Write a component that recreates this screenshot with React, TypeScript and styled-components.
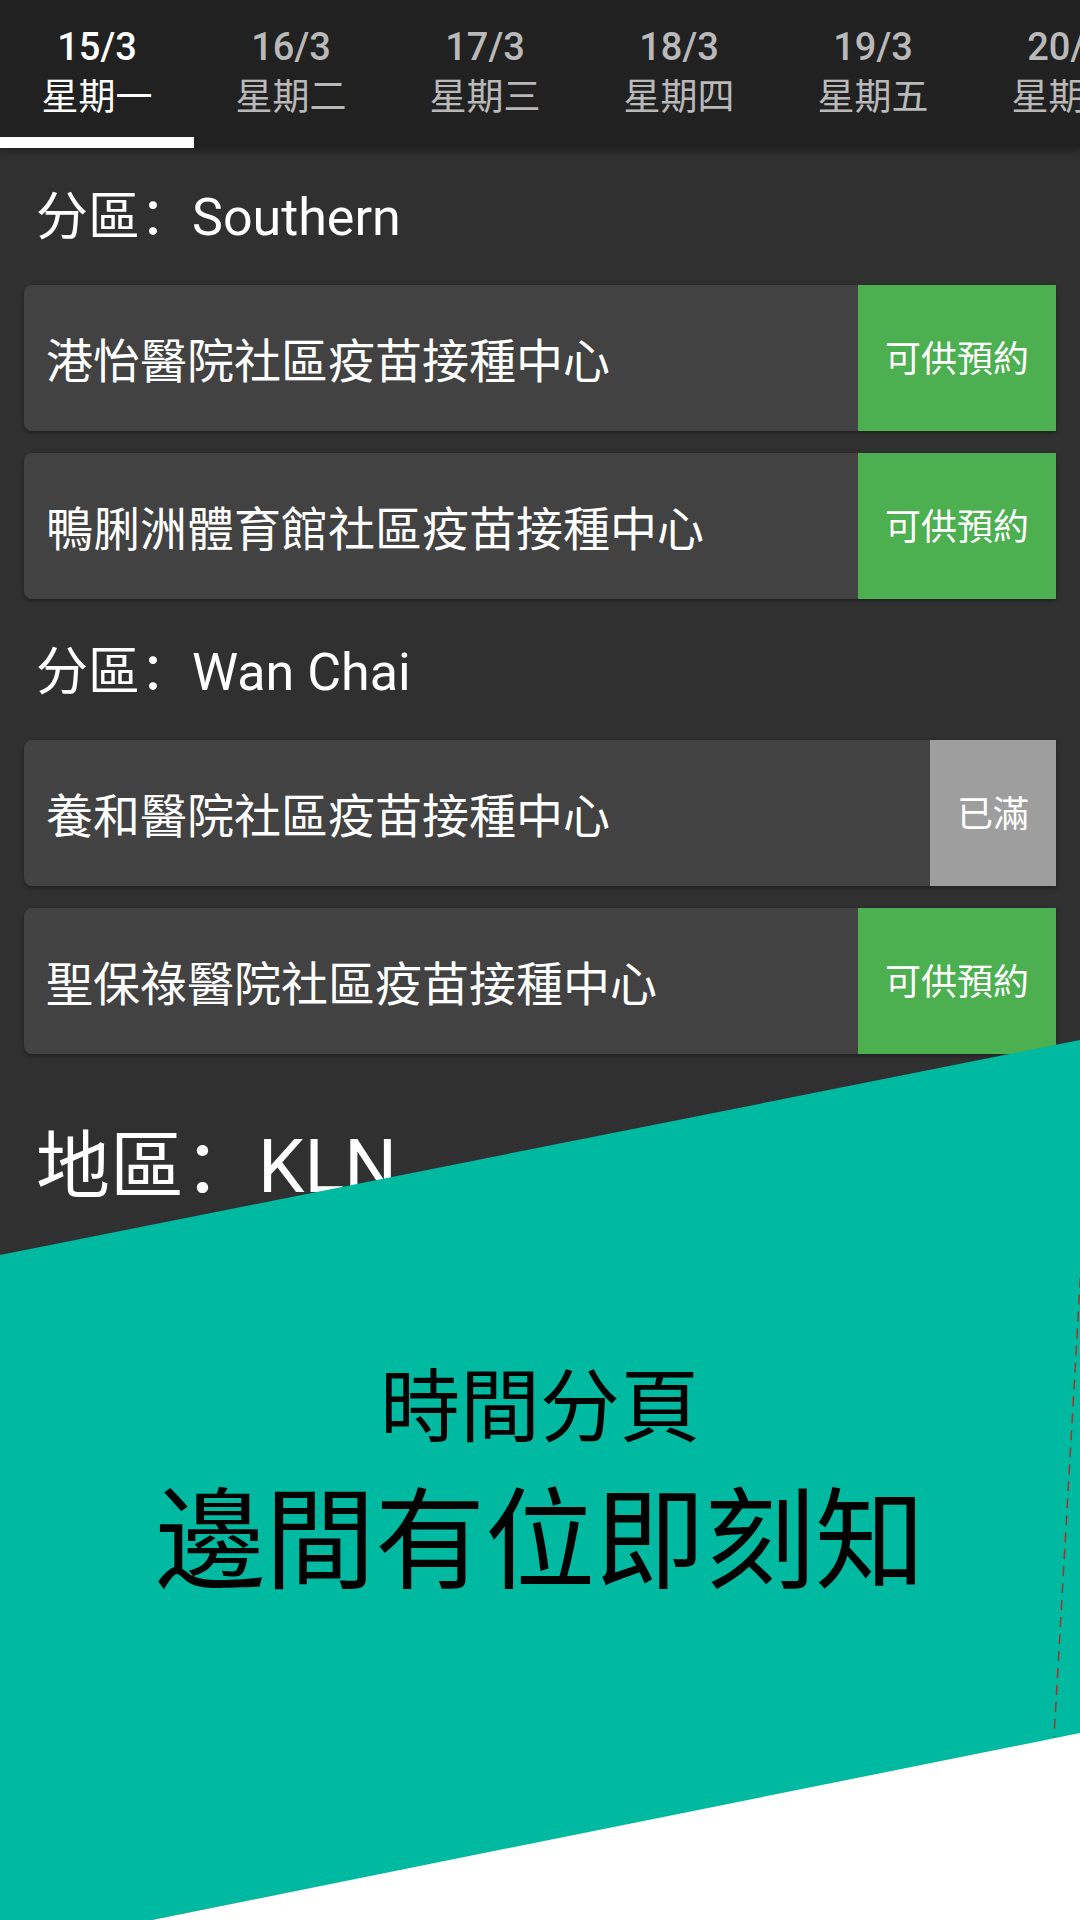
import React from "react";
import styled, { createGlobalStyle } from "styled-components";

const GlobalStyle = createGlobalStyle`
  html, body { margin: 0; padding: 0; background: #ffffff; }
  body { font-family: Roboto, "Noto Sans CJK SC", sans-serif; }
  * { box-sizing: border-box; }
`;

const Page = styled.div`
  position: relative;
  width: 1080px;
  height: 1920px;
  overflow: hidden;
  background: #303030;
  font-family: Roboto, "Noto Sans CJK SC", sans-serif;
  color: #ffffff;
`;

const TabBar = styled.nav`
  position: relative;
  z-index: 1;
  display: flex;
  height: 148px;
  background: #212121;
  box-shadow: 0 3px 8px rgba(0, 0, 0, 0.35);
  overflow: hidden;
`;

const Tab = styled.div<{ $active?: boolean }>`
  flex: 0 0 194px;
  display: flex;
  flex-direction: column;
  align-items: center;
  padding-top: 24px;
  color: ${(p) => (p.$active ? "#ffffff" : "rgba(255,255,255,0.7)")};
`;

const TabDate = styled.span`
  font-size: 38px;
  font-weight: 500;
  line-height: 46px;
  white-space: nowrap;
`;

const TabDay = styled.span`
  font-size: 37px;
  line-height: 56px;
  white-space: nowrap;
`;

const Indicator = styled.div<{ $active?: boolean }>`
  margin-top: auto;
  align-self: stretch;
  height: 11px;
  background: ${(p) => (p.$active ? "#ffffff" : "transparent")};
`;

const Content = styled.main`
  padding: 0 24px;
`;

const Section = styled.section`
  padding-top: 38px;
`;

const DistrictHeader = styled.h2`
  margin: 0 0 35px;
  padding-left: 12px;
  font-size: 52px;
  font-weight: 400;
  line-height: 64px;
`;

const CardList = styled.div`
  display: flex;
  flex-direction: column;
  gap: 22px;
  margin-bottom: 4px;
`;

const Card = styled.div`
  display: flex;
  align-items: stretch;
  height: 146px;
  background: #424242;
  border-radius: 8px 0 0 8px;
  box-shadow: 0 2px 4px rgba(0, 0, 0, 0.35);
`;

const CardName = styled.div`
  flex: 1;
  display: flex;
  align-items: center;
  padding: 8px 22px 0;
  font-size: 47px;
  line-height: 56px;
  white-space: nowrap;
`;

const Badge = styled.div<{ $full?: boolean }>`
  display: flex;
  align-items: center;
  padding: 4px 27px 0;
  background: ${(p) => (p.$full ? "#9e9e9e" : "#4caf50")};
  font-size: 36px;
  line-height: 44px;
  white-space: nowrap;
`;

const RegionHeader = styled.h1`
  margin: 69px 0 0;
  padding-left: 12px;
  font-size: 74px;
  font-weight: 400;
  line-height: 88px;
`;

const Overlay = styled.div`
  position: absolute;
  left: 0;
  right: 0;
  top: 1040px;
  bottom: 0;
  z-index: 2;
`;

const Backdrop = styled.svg`
  position: absolute;
  inset: 0;
  width: 100%;
  height: 100%;
  display: block;
`;

const Captions = styled.div`
  position: relative;
  display: flex;
  flex-direction: column;
  align-items: center;
  gap: 21px;
  padding-top: 320px;
  color: #000000;
`;

const Subtitle = styled.div`
  font-size: 80px;
  line-height: 96px;
  font-weight: 400;
`;

const Title = styled.div`
  font-size: 110px;
  line-height: 132px;
  font-weight: 400;
`;

const tabs = [
  ["15/3", "星期一"],
  ["16/3", "星期二"],
  ["17/3", "星期三"],
  ["18/3", "星期四"],
  ["19/3", "星期五"],
  ["20/3", "星期六"],
];

type Centre = { name: string; full?: boolean };
const sections: { district: string; centres: Centre[] }[] = [
  {
    district: "Southern",
    centres: [
      { name: "港怡醫院社區疫苗接種中心" },
      { name: "鴨脷洲體育館社區疫苗接種中心" },
    ],
  },
  {
    district: "Wan Chai",
    centres: [
      { name: "養和醫院社區疫苗接種中心", full: true },
      { name: "聖保祿醫院社區疫苗接種中心" },
    ],
  },
];

export default function App() {
  return (
    <>
      <GlobalStyle />
      <Page>
        <TabBar>
          {tabs.map(([date, day], i) => (
            <Tab key={date} $active={i === 0}>
              <TabDate>{date}</TabDate>
              <TabDay>{day}</TabDay>
              <Indicator $active={i === 0} />
            </Tab>
          ))}
        </TabBar>
        <Content>
          {sections.map((s) => (
            <Section key={s.district}>
              <DistrictHeader>分區：{s.district}</DistrictHeader>
              <CardList>
                {s.centres.map((c) => (
                  <Card key={c.name}>
                    <CardName>{c.name}</CardName>
                    <Badge $full={c.full}>{c.full ? "已滿" : "可供預約"}</Badge>
                  </Card>
                ))}
              </CardList>
            </Section>
          ))}
          <RegionHeader>地區：KLN</RegionHeader>
        </Content>
        <Overlay>
          <Backdrop viewBox="0 0 1080 880" preserveAspectRatio="none">
            <polygon points="0,215 1080,0 1080,695 152,880 0,880" fill="#00b9a1" />
            <polygon points="152,880 1080,693 1080,880" fill="#ffffff" />
            <line
              x1="1094"
              y1="0"
              x2="1054"
              y2="697"
              stroke="#a8322a"
              strokeWidth="1.5"
              strokeDasharray="10 7"
            />
          </Backdrop>
          <Captions>
            <Subtitle>時間分頁</Subtitle>
            <Title>邊間有位即刻知</Title>
          </Captions>
        </Overlay>
      </Page>
    </>
  );
}
